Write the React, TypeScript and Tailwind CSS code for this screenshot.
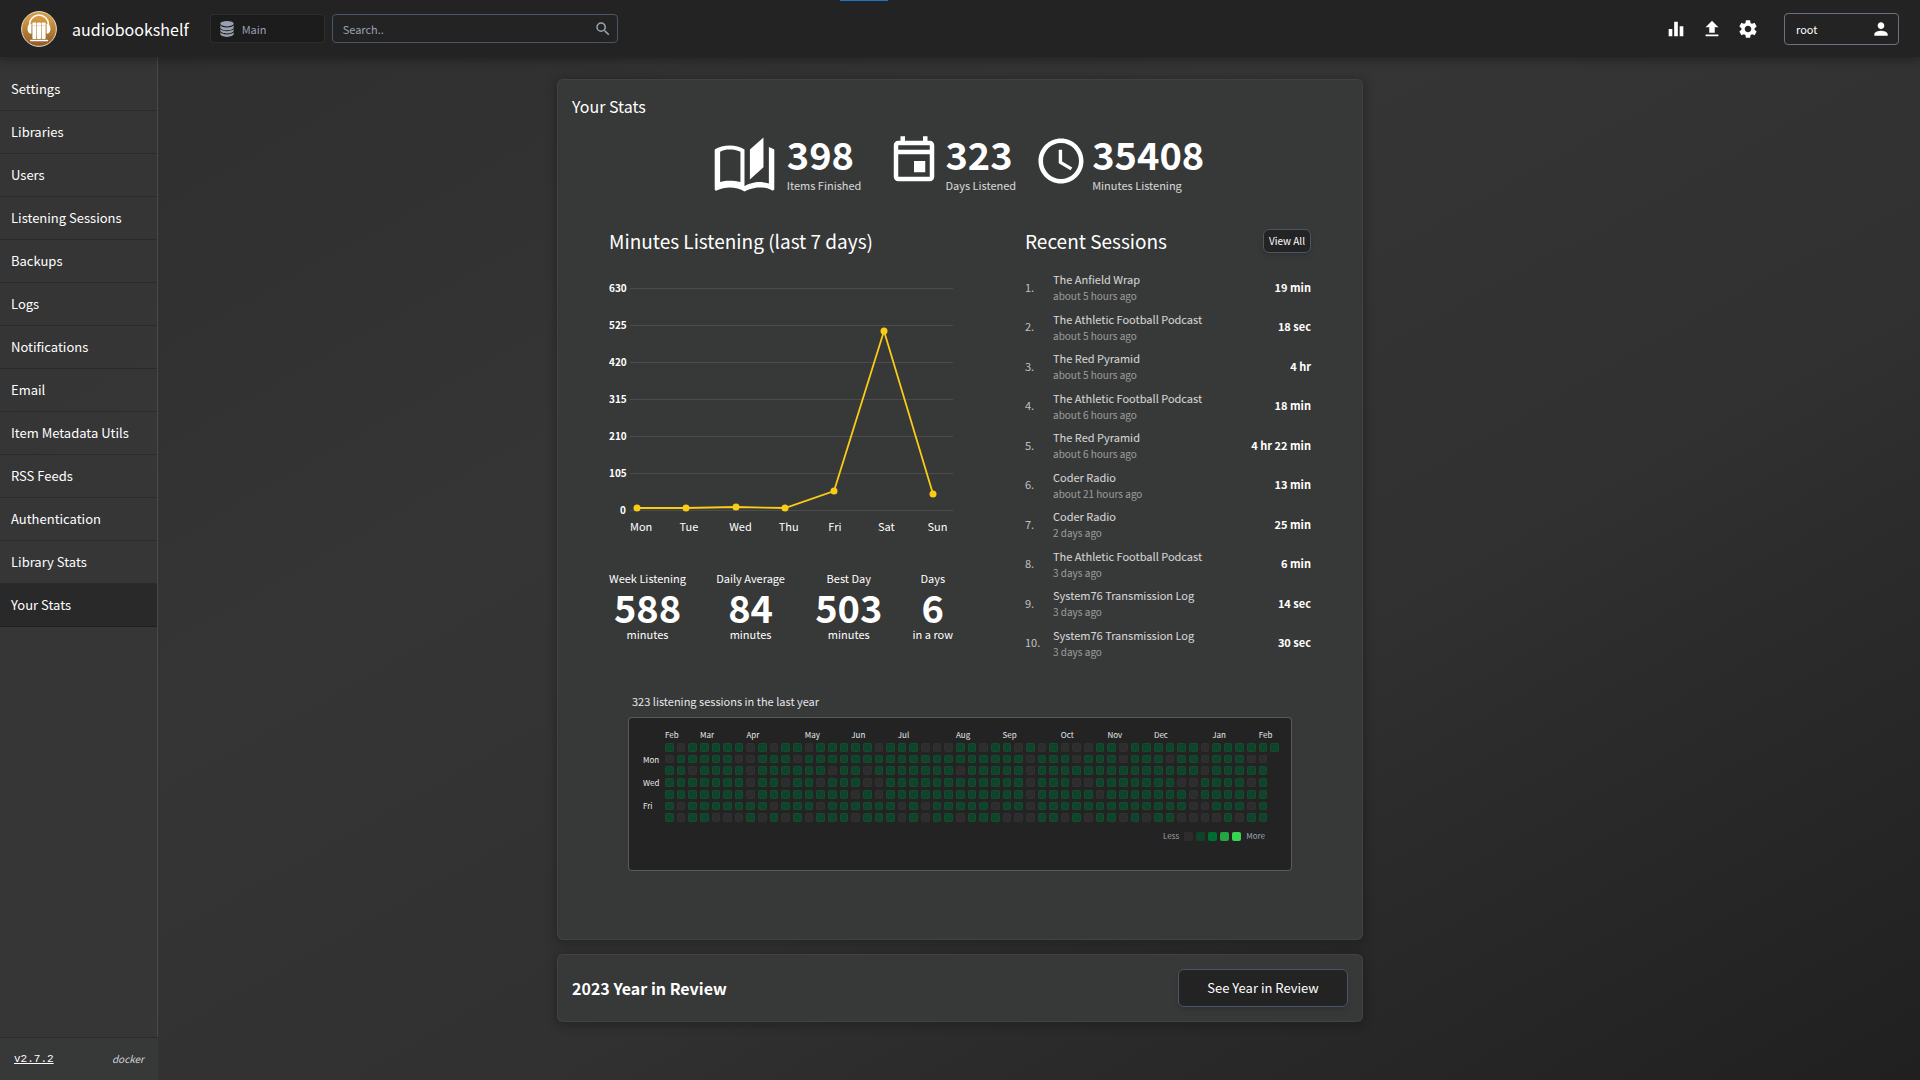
import { MdEqualizer, MdFileUpload, MdSettings, MdPerson, MdSearch, MdAccessTime } from "react-icons/md";

const NAV = ["Settings", "Libraries", "Users", "Listening Sessions", "Backups", "Logs", "Notifications", "Email", "Item Metadata Utils", "RSS Feeds", "Authentication", "Library Stats", "Your Stats"];

const SESSIONS = [
  ["The Anfield Wrap", "about 5 hours ago", "19 min"],
  ["The Athletic Football Podcast", "about 5 hours ago", "18 sec"],
  ["The Red Pyramid", "about 5 hours ago", "4 hr"],
  ["The Athletic Football Podcast", "about 6 hours ago", "18 min"],
  ["The Red Pyramid", "about 6 hours ago", "4 hr 22 min"],
  ["Coder Radio", "about 21 hours ago", "13 min"],
  ["Coder Radio", "2 days ago", "25 min"],
  ["The Athletic Football Podcast", "3 days ago", "6 min"],
  ["System76 Transmission Log", "3 days ago", "14 sec"],
  ["System76 Transmission Log", "3 days ago", "30 sec"],
];

const TICKS = [630, 525, 420, 315, 210, 105, 0];
const DAYS = ["Mon", "Tue", "Wed", "Thu", "Fri", "Sat", "Sun"];
const POINTS = [[7, 220], [56, 220], [106, 219], [155, 220], [204, 203], [254, 43], [303, 206]];

const WEEK = [
  ["Week Listening", "588", "minutes"],
  ["Daily Average", "84", "minutes"],
  ["Best Day", "503", "minutes"],
  ["Days", "6", "in a row"],
];

/* Week indexes without any listening, one list per weekday (Sunday first). */
const IDLE = [
  [1, 7, 9, 12, 18, 22, 23, 24, 27, 30, 32, 34, 35, 36, 39, 46],
  [0, 6, 7, 11, 31, 35, 39, 43, 46, 50, 51],
  [2, 7, 14, 17, 25, 31, 46],
  [7, 10, 13, 17, 18, 31, 35, 36, 44, 45, 50],
  [7, 16, 18, 31, 37, 45],
  [1, 9, 13, 20, 22, 28, 31, 45, 46, 50],
  [1, 4, 5, 6, 8, 10, 12, 16, 20, 22, 25, 29, 30, 31, 34, 36, 39, 41, 44, 45, 46, 47, 49],
];
const MONTHS: [string, number][] = [["Feb", 0], ["Mar", 3], ["Apr", 7], ["May", 12], ["Jun", 16], ["Jul", 20], ["Aug", 25], ["Sep", 29], ["Oct", 34], ["Nov", 38], ["Dec", 42], ["Jan", 47], ["Feb", 51]];
const WEEKS = Array.from({ length: 53 }, (_, i) => i);

function Logo() {
  return (
    <svg viewBox="0 0 36 36" className="size-9 shrink-0" aria-hidden="true">
      <defs>
        <linearGradient id="logo" x1="0" y1="0" x2="0" y2="1">
          <stop offset="0.2" stopColor="#d29a43" />
          <stop offset="1" stopColor="#8d5a26" />
        </linearGradient>
      </defs>
      <circle cx="18" cy="18" r="17.4" fill="url(#logo)" stroke="#e9dcc8" strokeWidth="1" />
      <path d="M8.600 15v-1.600a9.400 9.400 0 0 1 18.800 0V15" fill="none" stroke="#fff" strokeWidth="1.500" />
      <path d="M10.400 12.800c-2.200 0-3.900 1.900-3.900 5s1.700 5 3.900 5zM25.600 12.800c2.200 0 3.900 1.900 3.900 5s-1.700 5-3.900 5z" fill="#fff" />
      <rect x="11.400" y="11.400" width="4" height="16.600" rx="0.700" fill="#fff" />
      <rect x="16" y="11.400" width="4" height="16.600" rx="0.700" fill="#fff" />
      <rect x="20.600" y="11.400" width="4" height="16.600" rx="0.700" fill="#fff" />
      <path d="M11.400 14.700h4M16 14.700h4M20.600 14.700h4" stroke="#d8b98a" strokeWidth="0.500" />
      <rect x="9" y="28.800" width="18.200" height="1.500" rx="0.700" fill="#fff" />
    </svg>
  );
}

function DatabaseIcon() {
  return (
    <svg viewBox="0 0 14 16" className="h-4 w-[14px] shrink-0" fill="currentColor" aria-hidden="true">
      <ellipse cx="7" cy="2.700" rx="6.700" ry="2.700" />
      <path d="M.3 4.200c1 1.500 3.600 2.200 6.700 2.200s5.700-.7 6.700-2.200v2.200c0 1.600-3 2.900-6.700 2.900S.3 8 .3 6.400z" />
      <path d="M.3 8c1 1.400 3.600 2.200 6.700 2.200S12.700 9.400 13.700 8v1.600c0 1.600-3 2.900-6.700 2.900S.3 11.200.3 9.600z" />
      <path d="M.3 11.200c1 1.400 3.600 2.200 6.700 2.200s5.700-.8 6.700-2.200v1.600c0 1.800-3 3.100-6.700 3.100S.3 14.600.3 12.800z" />
    </svg>
  );
}

function BookIcon() {
  return (
    <svg viewBox="0 0 24 24" className="mr-1.5 size-[65px]" fill="#fff" aria-hidden="true">
      <path d="M19 2L14 6.500V17.500L19 13V2M6.500 5C4.550 5 2.450 5.400 1 6.500V21.160C1 21.410 1.250 21.660 1.500 21.660C1.600 21.660 1.650 21.590 1.750 21.590C3.100 20.940 5.050 20.500 6.500 20.500C8.450 20.500 10.550 20.900 12 22C13.350 21.150 15.800 20.500 17.500 20.500C19.150 20.500 20.850 20.810 22.250 21.560C22.350 21.610 22.400 21.590 22.500 21.590C22.750 21.590 23 21.340 23 21.090V6.500C22.400 6.050 21.750 5.750 21 5.500V19C19.900 18.650 18.700 18.500 17.500 18.500C15.800 18.500 13.350 19.150 12 20V6.500C10.550 5.400 8.450 5 6.500 5M6.500 6.500C7.950 6.500 9.200 6.740 10.500 7.270V18.500C9.200 18.150 7.700 18 6.500 18C5.300 18 4.100 18.150 3 18.500V7.270C4.100 6.740 5.200 6.500 6.500 6.500Z" />
    </svg>
  );
}

function CalendarIcon() {
  return (
    <svg viewBox="0 0 24 24" className="mt-0.5 size-[54px]" fill="#fff" fillRule="evenodd" aria-hidden="true">
      <path d="M19 3h-1V1h-2v2H8V1H6v2H5c-1.110 0-1.990.9-1.990 2L3 19c0 1.100.89 2 2 2h14c1.100 0 2-.9 2-2V5c0-1.100-.9-2-2-2zM5 5h14v2H5zM5 9h14v10H5zM12 12h5v5h-5z" />
    </svg>
  );
}

function Total({ icon, value, label }: { icon: React.ReactNode; value: string; label: string }) {
  return (
    <div className="flex items-start px-[7px]">
      {icon}
      <div className="px-1">
        <p className="text-[38px] leading-[43px] font-bold">{value}</p>
        <p className="mt-0.5 text-[11px] leading-4 text-white/80">{label}</p>
      </div>
    </div>
  );
}

function Chart() {
  return (
    <div className="flex">
      <div className="flex w-[17px] flex-col gap-[21px]">
        {TICKS.map((t) => (
          <span key={t} className="block h-4 text-right text-[10px] leading-4 font-bold">{t}</span>
        ))}
      </div>
      <div className="ml-1 min-w-0 flex-1 pt-2">
        <svg viewBox="0 0 323 223" className="block h-[223px] w-full overflow-visible" aria-hidden="true">
          {TICKS.map((t, i) => (
            <rect key={t} x="0" y={i * 37} width="323" height="1" fill="#4b4c4d" />
          ))}
          <polyline points={POINTS.map((p) => p.join(",")).join(" ")} fill="none" stroke="#facc15" strokeWidth="1.800" />
          {POINTS.map(([x, y]) => (
            <circle key={x} cx={x} cy={y} r="3.500" fill="#facc15" />
          ))}
        </svg>
        <div className="-mr-6 mt-[7px] flex text-[11px] leading-4">
          {DAYS.map((d) => (
            <span key={d} className="flex-1">{d}</span>
          ))}
        </div>
      </div>
    </div>
  );
}

function Heatmap() {
  return (
    <section className="mx-auto mt-[29px] w-[664px]">
      <p className="mb-1.5 px-1 text-[11px] leading-5 text-gray-200">323 listening sessions in the last year</p>
      <div className="h-[154px] rounded-sm border border-white/25 bg-[#232323] pt-[11px] pr-3 pl-[14px] text-gray-200">
        <div className="flex">
          <div className="w-[22px] pt-[19px] text-[8px] leading-[23px]">
            <p>Mon</p>
            <p>Wed</p>
            <p>Fri</p>
          </div>
          <div className="flex-1">
            <div className="grid grid-cols-[repeat(53,minmax(0,1fr))] gap-x-[3px] text-[8px] leading-3">
              {MONTHS.map(([m, c]) => (
                <span key={c} className="row-start-1 whitespace-nowrap" style={{ gridColumnStart: c + 1 }}>{m}</span>
              ))}
            </div>
            <div className="mt-0.5 grid h-[79px] grid-flow-col grid-cols-[repeat(53,minmax(0,1fr))] grid-rows-7 gap-[3px]">
              {WEEKS.flatMap((w) =>
                IDLE.map((idle, d) =>
                  w === 52 && d > 0 ? null : (
                    <div key={w * 7 + d} className={idle.includes(w) ? "rounded-xs border border-white/2 bg-[#2d2d2d]" : "rounded-xs border border-white/4 bg-[#0e4429]"} />
                  ),
                ),
              )}
            </div>
          </div>
        </div>
        <div className="mt-1.5 flex items-center justify-end gap-[3px] pr-[14px] text-[8px] leading-4 text-gray-400">
          <span className="mr-0.5">Less</span>
          <span className="size-[9px] rounded-xs bg-[#2d2d2d]" />
          <span className="size-[9px] rounded-xs bg-[#0e4429]" />
          <span className="size-[9px] rounded-xs bg-[#006d32]" />
          <span className="size-[9px] rounded-xs bg-[#26a641]" />
          <span className="size-[9px] rounded-xs bg-[#39d353]" />
          <span className="ml-0.5">More</span>
        </div>
      </div>
    </section>
  );
}

const CARD = "mx-auto w-full max-w-[806px] rounded-md border border-white/5 bg-[#373838] shadow-[0_2px_10px_2px_rgba(17,17,17,0.35)]";

export default function App() {
  return (
    <div className="flex min-h-screen flex-col bg-[linear-gradient(to_right_bottom,#2e2e2e,#303030,#313131,#333333,#353535,#343434,#323232,#313131,#2c2c2c,#282828,#242424,#202020)] font-['Noto_Sans_CJK_SC',sans-serif] text-white">
      <div className="absolute top-0 left-[840px] z-20 h-px w-12 bg-[#1a73c4]" />
      <header className="z-10 flex h-[57px] items-center bg-[#232323] px-[21px] shadow-[0_4px_8px_rgba(17,17,17,0.4)]">
        <a href="#home" className="flex items-center gap-[15px]">
          <Logo />
          <span className="text-base leading-6">audiobookshelf</span>
        </a>
        <button className="ml-[21px] flex h-[29px] w-[115px] items-center gap-2 rounded-sm border border-white/8 bg-[#1c1c1c] px-[9px] text-[11px] leading-4 text-gray-400">
          <DatabaseIcon />
          Main
        </button>
        <label className="ml-[7px] flex h-[29px] w-[286px] items-center rounded-sm border border-gray-600 pr-[5px] pl-[10px] text-gray-400">
          <input aria-label="Search" placeholder="Search.." className="min-w-0 flex-1 bg-transparent text-[11px] leading-4 outline-none placeholder:text-gray-400" />
          <MdSearch className="size-[18px]" />
        </label>
        <nav className="ml-auto flex items-center gap-[14px]">
          <a href="#stats" aria-label="Stats"><MdEqualizer className="size-[22px]" /></a>
          <a href="#upload" aria-label="Upload"><MdFileUpload className="size-[22px]" /></a>
          <a href="#settings" aria-label="Settings"><MdSettings className="size-[22px]" /></a>
        </nav>
        <button className="ml-[25px] flex h-8 w-[115px] items-center justify-between rounded-sm border border-gray-500 pr-[7px] pl-[11px] text-[11px] leading-4">
          root
          <MdPerson className="size-5" />
        </button>
      </header>

      <div className="relative flex flex-1">
        <aside className="absolute inset-y-0 left-0 flex w-[158px] flex-col bg-[#383838]/70">
          <nav className="flex-1 border-r border-white/10 pt-[11px]">
            {NAV.map((n) => (
              <a
                key={n}
                href="#config"
                className={n === "Your Stats" ? "flex h-[43px] items-center border-b border-black/20 bg-[#292929] px-[11px] text-[13px] leading-5" : "flex h-[43px] items-center border-b border-black/20 px-[11px] text-[13px] leading-5"}
              >
                {n}
              </a>
            ))}
          </nav>
          <footer className="flex h-[43px] items-center justify-between border-t border-black/20 bg-[#373838] px-[14px]">
            <a href="#changelog" className="font-['Liberation_Mono',monospace] text-[11px] leading-4 underline">v2.7.2</a>
            <span className="text-[10px] leading-4 text-gray-300 italic">docker</span>
          </footer>
        </aside>

        <main className="flex-1 pt-[22px] pb-10">
          <section className={`${CARD} px-[14px] pt-[14px] pb-[68px]`}>
            <h1 className="text-base leading-6">Your Stats</h1>
            <div className="mt-[14px] flex justify-center">
              <div className="mr-2"><Total icon={<BookIcon />} value="398" label="Items Finished" /></div>
              <Total icon={<CalendarIcon />} value="323" label="Days Listened" />
              <Total icon={<MdAccessTime className="mt-0.5 size-[54px]" />} value="35408" label="Minutes Listening" />
            </div>
            <div className="mt-[30px] flex justify-between px-[37px]">
              <div className="w-[344px]">
                <h2 className="text-[19px] leading-7">Minutes Listening (last 7 days)</h2>
                <div className="mt-[25px]"><Chart /></div>
                <div className="mt-[34px] flex justify-between text-center text-[11px]">
                  {WEEK.map(([a, b, c]) => (
                    <div key={a}>
                      <p className="leading-5">{a}</p>
                      <p className="text-[38px] leading-[37px] font-bold">{b}</p>
                      <p className="leading-[18px]">{c}</p>
                    </div>
                  ))}
                </div>
              </div>
              <div className="w-[286px]">
                <div className="flex items-center justify-between">
                  <h2 className="text-[19px] leading-7">Recent Sessions</h2>
                  <button className="h-6 rounded-md border border-gray-600 bg-[#232323] px-[5px] text-[10px] leading-4 shadow-md">View All</button>
                </div>
                <ol className="mt-3 grid h-[395px] grid-rows-10">
                  {SESSIONS.map(([title, ago, time], i) => (
                    <li key={i} className="flex items-center">
                      <span className="w-7 text-[11px] leading-4 text-white/70">{i + 1}.</span>
                      <div className="flex-1 pt-0.5">
                        <p className="text-[11px] leading-[17px] text-white/80">{title}</p>
                        <p className="text-[10px] leading-4 text-white/50">{ago}</p>
                      </div>
                      <span className="text-[11px] leading-4 font-bold">{time}</span>
                    </li>
                  ))}
                </ol>
              </div>
            </div>
            <Heatmap />
          </section>

          <section className={`${CARD} mt-[14px] flex h-[68px] items-center justify-between px-[14px]`}>
            <p className="text-base leading-6 font-bold">2023 Year in Review</p>
            <button className="h-[38px] w-[170px] rounded-md border border-gray-600 bg-[#232323] text-[13px] leading-5 shadow-md">See Year in Review</button>
          </section>
        </main>
      </div>
    </div>
  );
}
